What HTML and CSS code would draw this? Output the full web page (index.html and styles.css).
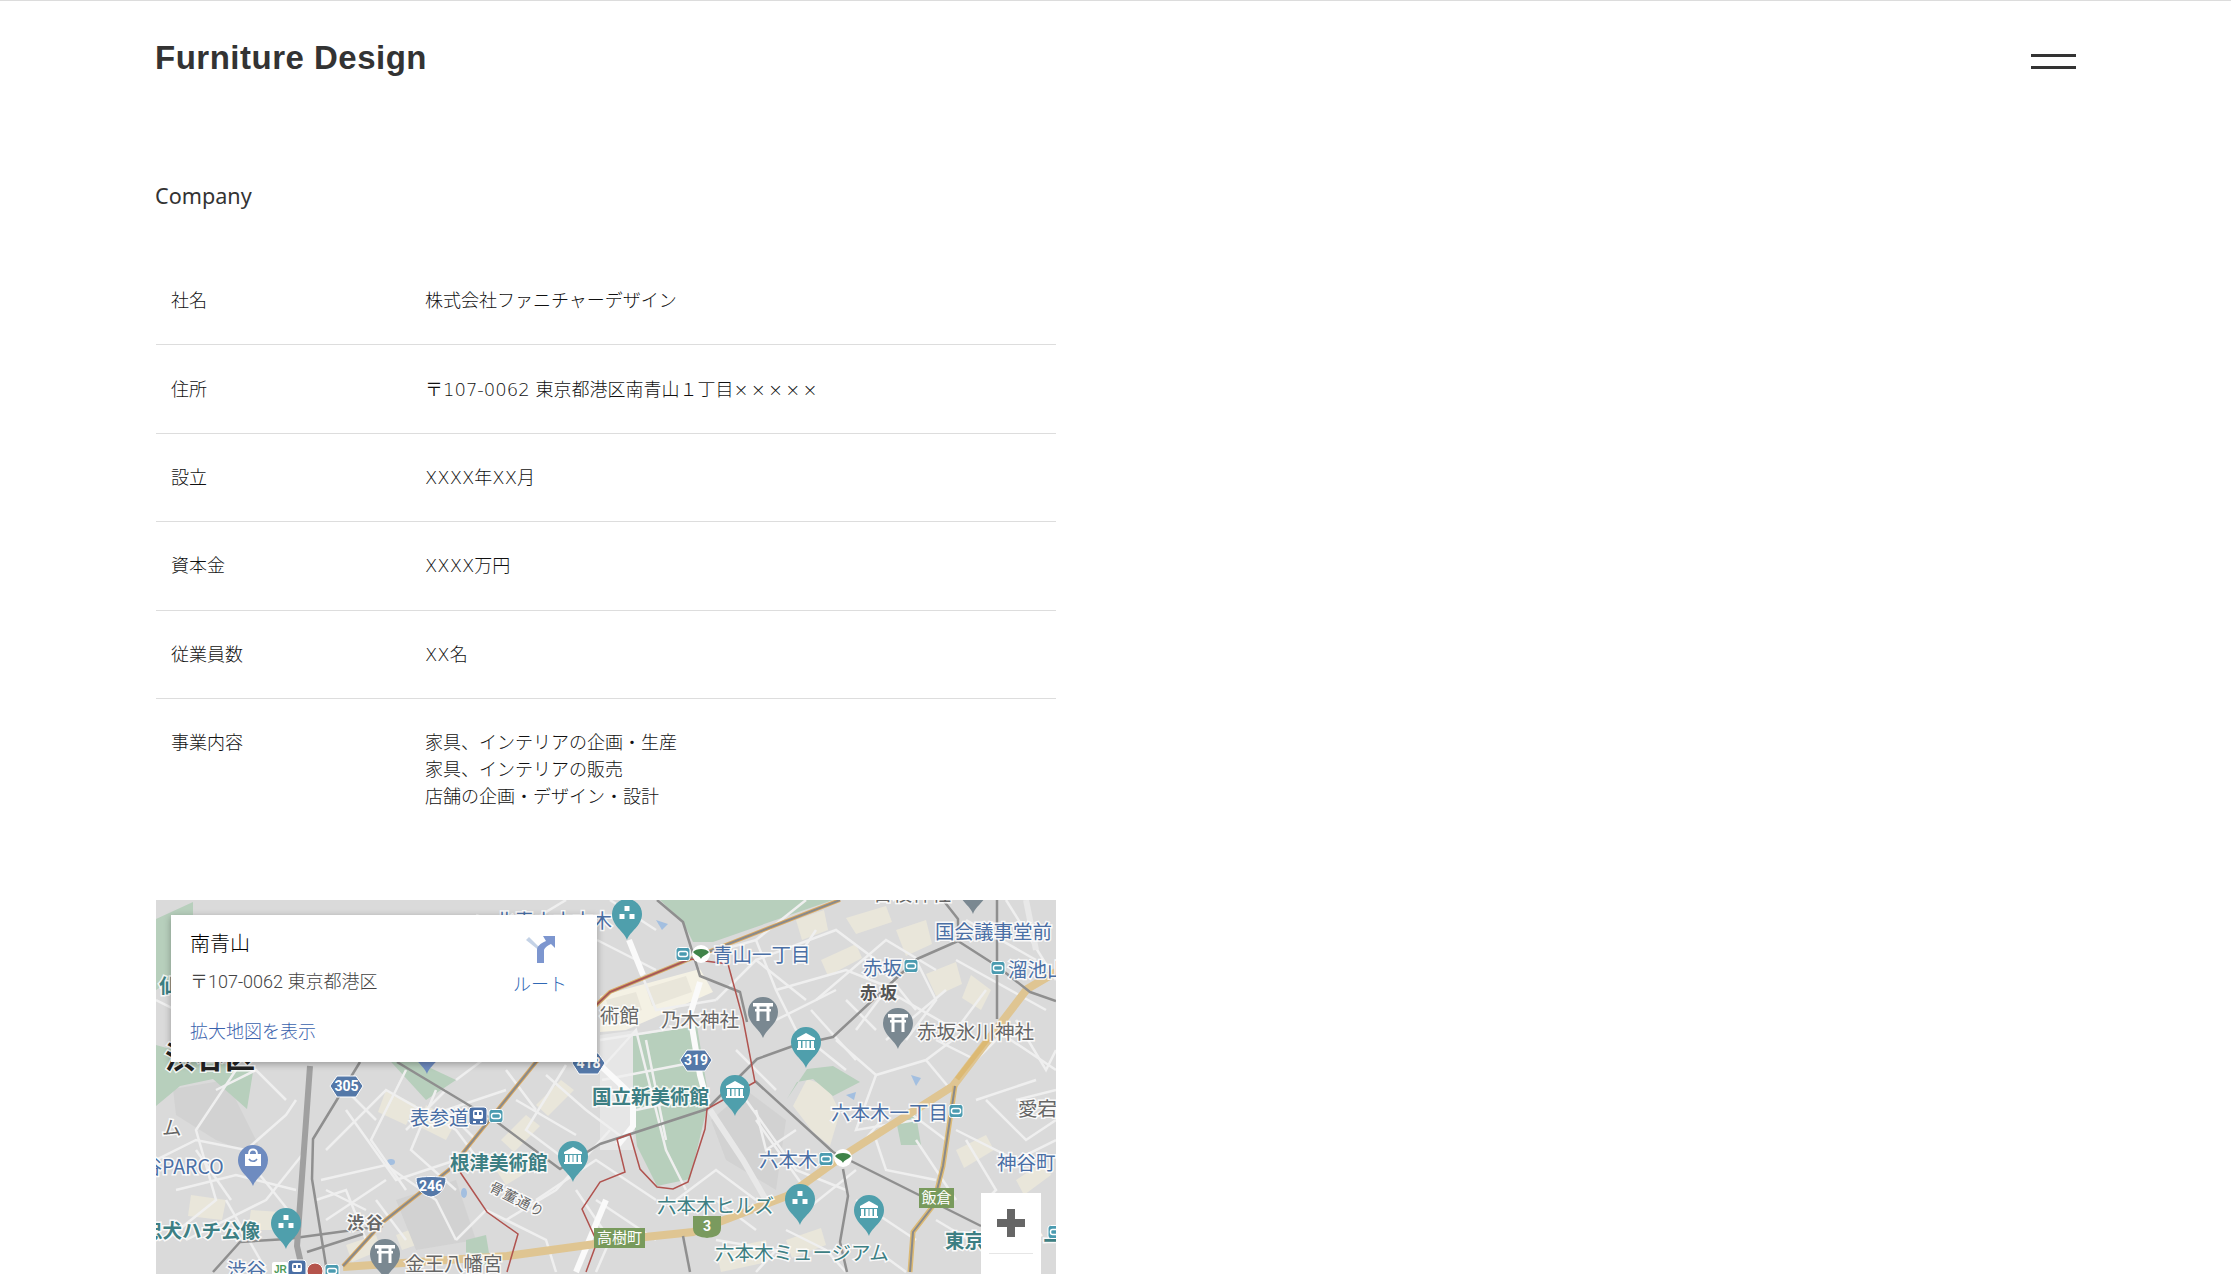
FILE: index.html
```html
<!DOCTYPE html>
<html lang="ja">
<head>
<meta charset="utf-8">
<title>Furniture Design</title>
<link rel="stylesheet" href="styles.css">
</head>
<body>
<header class="site-header">
  <h1 class="logo">Furniture Design</h1>
  <button class="menu" aria-label="menu"><span class="menu-line"></span><span class="menu-line"></span></button>
</header>
<main class="content">
  <h2 class="section-title">Company</h2>
  <table class="info">
    <tr><th>社名</th><td>株式会社ファニチャーデザイン</td></tr>
    <tr><th>住所</th><td>〒107-0062 東京都港区南青山１丁目<span class="marks">×××××</span></td></tr>
    <tr><th>設立</th><td>XXXX年XX月</td></tr>
    <tr><th>資本金</th><td>XXXX万円</td></tr>
    <tr><th>従業員数</th><td>XX名</td></tr>
    <tr class="last"><th>事業内容</th><td>家具、インテリアの企画・生産<br>家具、インテリアの販売<br>店舗の企画・デザイン・設計</td></tr>
  </table>
  <div class="map">
    <svg class="map-art" width="900" height="450" viewBox="0 0 900 450" xmlns="http://www.w3.org/2000/svg">
      <defs>
        <path id="pin" d="M0 26C-3 17-15 12-15 0A15 15 0 1 1 15 0C15 12 3 17 0 26Z"/>
        <g id="museum" fill="#fff"><path d="M0-9L9-4V-2H-9V-4Z"/><rect x="-8" y="-1" width="3" height="7"/><rect x="-3.5" y="-1" width="3" height="7"/><rect x=".5" y="-1" width="3" height="7"/><rect x="5" y="-1" width="3" height="7"/><rect x="-9" y="6" width="18" height="2"/></g>
        <g id="torii" fill="#fff"><rect x="-10" y="-9" width="20" height="3.5"/><rect x="-8" y="-3" width="16" height="2.5"/><rect x="-6.5" y="-6" width="3" height="15"/><rect x="3.5" y="-6" width="3" height="15"/></g>
        <g id="dots" fill="#fff"><rect x="-2.5" y="-8" width="5" height="5"/><rect x="-7.5" y="0" width="5" height="5"/><rect x="2.5" y="0" width="5" height="5"/></g>
        <g id="sub"><rect x="-7" y="-6.5" width="14" height="13" rx="2.5" fill="#4b9bb0" stroke="#fff"/><rect x="-4.5" y="-2.5" width="9" height="5" rx="2" fill="none" stroke="#fff" stroke-width="1.5"/></g>
        <g id="metro"><rect x="-9" y="-9" width="18" height="18" rx="3" fill="#4a6fa5" stroke="#fff"/><rect x="-5" y="-6" width="10" height="9" rx="2" fill="#fff"/><rect x="-3.5" y="-4" width="2.5" height="3" fill="#4a6fa5"/><rect x="1" y="-4" width="2.5" height="3" fill="#4a6fa5"/><path d="M-5 6H-2M2 6H5" stroke="#fff" stroke-width="2"/></g>
        <g id="ginkgo"><circle r="9" fill="#fff"/><path d="M0 5C-1 2-6 1-8-2C-5-6 5-6 8-2C6 1 1 2 0 5Z" fill="#3f8349"/></g>
      </defs>
      <rect class="land" width="900" height="450"/>

      <polygon class="pale" points="444,96 544,69 557,92 470,130 444,132"/>
      <g class="cream">
        <polygon points="450,100 480,92 486,110 456,120"/>
        <polygon points="490,88 530,76 536,92 496,106"/>
        <polygon points="640,20 668,10 672,30 646,40"/>
        <polygon points="690,18 730,6 736,22 700,34"/>
        <polygon points="740,30 770,20 776,44 750,56"/>
        <polygon points="665,60 700,44 706,58 672,76"/>
        <polygon points="770,74 800,62 806,84 780,96"/>
        <polygon points="815,75 835,90 825,110 806,98"/>
        <polygon points="637,206 651,179 671,186 684,212 674,246 657,232"/>
        <polygon points="230,190 260,205 250,225 222,212"/>
        <polygon points="270,205 300,222 290,240 262,226"/>
        <polygon points="345,240 370,215 384,226 358,252"/>
        <polygon points="380,205 405,180 418,190 392,216"/>
        <polygon points="35,295 70,300 66,320 32,316"/>
        <polygon points="95,310 125,312 122,330 92,330"/>
        <polygon points="190,345 220,335 225,350 196,362"/>
        <polygon points="240,335 280,320 286,336 246,350"/>
        <polygon points="630,340 665,328 670,345 636,358"/>
        <polygon points="800,250 830,235 838,250 808,268"/>
        <polygon points="860,280 890,260 895,275 868,295"/>
        <polygon points="560,350 610,340 612,362 565,372"/>
        <polygon points="340,270 370,255 378,268 350,285"/>
      </g>
      <polygon class="darker" points="17,189 70,180 110,260 60,240 20,215"/>
      <polygon class="darker" points="240,300 300,280 320,340 260,350"/>
      <polygon class="darker" points="590,190 630,220 620,290 570,260 555,220"/>
      <polygon class="white-area" points="444,135 480,130 477,250 444,250"/>

      <polygon class="green" points="504,0 677,0 557,42 537,42 527,22"/>
      <polygon class="green" points="477,136 541,126 554,206 550,212 534,279 501,286 481,246 477,212"/>
      <polygon class="green" points="631,199 651,169 677,166 704,182 677,196 657,179 641,182"/>
      <polygon class="green" points="0,19 37,2 37,15 15,22 15,80 0,90"/>
      <polygon class="green" points="0,145 97,172 91,209 57,179 24,186 0,206"/>
      <polygon class="green" points="215,140 300,180 270,200"/>
      <polygon class="green" points="740,220 760,215 765,245 745,245"/>
      <polygon class="green" points="310,340 330,335 335,365 310,365"/>
      <polygon class="water" points="500,20 512,24 506,30"/>
      <polygon class="water" points="690,195 700,192 698,200"/>
      <polygon class="water" points="755,175 765,178 760,186"/>
      <ellipse class="water" cx="235" cy="262" rx="4" ry="3"/>
      <ellipse class="water" cx="308" cy="293" rx="3" ry="5"/>

      <g class="streets">
        <polyline points="0,100 60,130 80,170 40,230 60,300 10,340"/>
        <polyline points="0,260 40,240 90,250 130,215 140,200"/>
        <polyline points="20,290 80,275 140,290"/>
        <polyline points="70,300 110,370"/>
        <polyline points="30,340 110,300 150,250"/>
        <polyline points="170,250 230,190 300,230 330,270"/>
        <polyline points="190,210 240,280 300,260"/>
        <polyline points="165,280 230,265 280,300 300,340"/>
        <polyline points="170,320 230,280"/>
        <polyline points="210,340 190,290 160,300"/>
        <polyline points="250,170 215,240 250,290"/>
        <polyline points="280,190 255,250 300,290"/>
        <polyline points="320,240 290,210 350,190"/>
        <polyline points="350,320 400,290 454,230"/>
        <polyline points="390,175 430,210 470,240"/>
        <polyline points="410,165 370,230 410,260"/>
        <polyline points="360,200 420,235"/>
        <polyline points="300,340 330,310 390,340 400,372"/>
        <polyline points="420,290 454,340 440,372"/>
        <polyline points="380,300 440,260 500,300"/>
        <polyline points="444,170 480,130 510,250 530,290"/>
        <polyline points="444,140 540,125"/>
        <polyline points="446,180 550,160"/>
        <polyline points="490,140 510,240"/>
        <polyline points="480,210 550,195"/>
        <polyline points="480,60 500,110 560,100"/>
        <polyline points="530,60 600,40 620,90 640,130 690,170"/>
        <polyline points="600,40 650,0"/>
        <polyline points="600,60 680,30 720,60 760,110"/>
        <polyline points="660,100 730,40 780,70"/>
        <polyline points="620,90 690,70 740,90"/>
        <polyline points="700,130 730,90 800,130 830,90"/>
        <polyline points="680,140 720,175 770,160 810,130"/>
        <polyline points="720,175 700,230 760,220"/>
        <polyline points="770,160 795,190"/>
        <polyline points="760,60 780,100 750,140"/>
        <polyline points="800,60 890,110"/>
        <polyline points="850,0 900,80"/>
        <polyline points="860,120 890,170 900,150"/>
        <polyline points="830,200 870,240 900,220"/>
        <polyline points="810,240 840,290 830,300"/>
        <polyline points="820,200 880,180"/>
        <polyline points="800,230 860,260 900,240"/>
        <polyline points="780,280 730,270 720,240"/>
        <polyline points="640,230 610,250 600,210"/>
        <polyline points="590,200 640,270 690,290"/>
        <polyline points="600,300 560,270 520,300"/>
        <polyline points="630,330 670,350 690,372"/>
        <polyline points="560,340 620,350 600,372"/>
        <polyline points="700,300 760,340"/>
        <polyline points="720,350 750,372"/>
        <polyline points="780,320 830,350 850,372"/>
        <polyline points="600,220 650,290"/>
        <polyline points="320,15 360,30 410,0"/>
        <polyline points="441,40 500,70"/>
        <polyline points="454,0 500,30"/>
        <polyline points="560,100 600,60 650,100"/>
        <polyline points="620,120 680,90"/>
        <polyline points="720,130 690,100"/>
        <polyline points="780,140 820,160 850,130"/>
        <polyline points="750,210 790,240"/>
        <polyline points="700,250 730,215"/>
        <polyline points="860,200 900,190"/>
        <polyline points="840,130 900,170"/>
        <polyline points="220,300 250,340"/>
        <polyline points="60,190 100,170 130,200"/>
        <polyline points="40,250 75,300"/>
        <polyline points="100,270 140,320"/>
        <polyline points="440,300 500,340"/>
        <polyline points="560,300 600,330"/>
        <polyline points="300,180 340,150"/>
        <polyline points="350,170 380,210"/>
        <polyline points="180,180 220,220"/>
        <polyline points="170,290 210,310"/>
        <polyline points="250,230 290,190"/>
        <polyline points="580,150 620,190"/>
        <polyline points="655,110 700,160"/>
        <polyline points="730,140 790,90"/>
        <polyline points="810,20 880,60"/>
        <polyline points="640,60 660,30"/>
        <polyline points="760,240 800,300"/>
        <polyline points="650,310 700,270"/>
      </g>
      <g class="streets-wide">
        <polyline points="473,40 487,75"/>
        <polyline points="544,82 534,115 544,175 552,205"/>
        <polyline points="444,165 477,196 477,226 462,245"/>
        <polyline points="420,372 450,300"/>
      </g>
      <polyline class="light-road" points="554,210 587,260 610,300"/>
      <polyline class="light-road" points="870,0 880,50"/>

      <polyline class="tan" points="187,367 351,356 454,342 489,337 537,332 631,296 687,256 797,186 871,89 900,72"/>
      <polyline class="gray-road" points="241,162 341,222 404,269 444,244 551,209 601,159 637,146 677,137 761,59 802,41 841,66 874,92 900,101"/>
      <polyline class="gray-road" points="599,181 677,252 761,294 825,326"/>
      <polyline class="gray-road" points="687,269 692,296 684,342 691,372"/>
      <polyline class="gray-road" points="501,0 527,22 544,76 584,92 591,122"/>
      <polyline class="gray-road" points="841,0 841,119"/>
      <polyline class="gray-road" points="787,0 802,19 802,41"/>
      <polyline class="gray-road" points="527,336 534,372"/>
      <polyline class="gray-road" points="204,162 157,239 156,279 171,372"/>
      <polyline class="gray-road" points="57,372 84,342 131,339 227,326"/>
      <polyline class="gray-road" points="151,352 207,334"/>
      <polyline class="rail" points="154,166 141,346 147,372"/>
      <polyline class="tan-thin" points="799,186 787,266 777,306 757,332 754,372"/>
      <polyline class="gray-thin" points="799,186 787,266 777,306 757,332 754,372"/>
      <polyline class="tan-thin" points="832,139 801,179"/>
      <polyline class="tan-road" points="187,366 227,322 294,269 380,162 454,92 534,59 684,0"/>
      <polyline class="gray-thin" points="187,366 227,322 294,269 380,162 454,92 534,59 684,0"/>
      <polyline class="boundary" points="304,272 331,312 362,334 351,372"/>
      <polyline class="boundary" points="380,162 454,92 534,59 572,64 587,119 599,182 551,209 549,229 532,282 517,289 501,287 484,269 474,234 461,239 469,272 444,282 426,309 441,342 430,372"/>

      <text class="t gray" x="717" y="-8">日枝神社</text>
      <text class="t blue" x="339" y="19">北青山六本木</text>
      <text class="t blue" x="557" y="53">青山一丁目</text>
      <text class="t blue" x="779" y="30">国会議事堂前</text>
      <text class="t blue" x="707" y="66">赤坂</text>
      <text class="t blue" x="852" y="68">溜池山王</text>
      <text class="t dark sp" x="704" y="91">赤坂</text>
      <text class="t gray" x="505" y="118">乃木神社</text>
      <text class="t gray" x="761" y="130">赤坂氷川神社</text>
      <text class="t gray" x="444" y="114">術館</text>
      <text class="t teal bold" x="436" y="195">国立新美術館</text>
      <text class="t blue" x="675" y="211">六本木一丁目</text>
      <text class="t gray" x="862" y="207">愛宕</text>
      <text class="t blue" x="603" y="258">六本木</text>
      <text class="t blue" x="841" y="261">神谷町</text>
      <text class="t teal" x="501" y="304">六本木ヒルズ</text>
      <text class="t teal" x="559" y="351">六本木ミュージアム</text>
      <text class="t teal bold" x="789" y="339">東京ミッドー</text>
      <text class="t xdark bold big" x="9" y="155">渋谷区</text>
      <text class="t blue" x="254" y="216">表参道</text>
      <text class="t gray" x="6" y="226">ム</text>
      <text class="t blue" x="-33" y="265">渋谷PARCO</text>
      <text class="t teal bold" x="294" y="261">根津美術館</text>
      <text class="t gray small" transform="translate(335 285) rotate(27)">骨董通り</text>
      <text class="t teal bold" x="-13" y="329">忠犬ハチ公像</text>
      <text class="t gray bold sm" x="191" y="321">渋谷</text>
      <text class="t gray" x="249" y="362">金王八幡宮</text>
      <text class="t blue" x="71" y="368">渋谷</text>
      <text class="t teal bold" x="3" y="84">仙</text>

      <use href="#pin" x="471" y="14" fill="#4f9fac"/><use href="#dots" x="471" y="14"/>
      <use href="#pin" x="607" y="112" fill="#7a8891"/><use href="#torii" x="607" y="112"/>
      <use href="#pin" x="650" y="142" fill="#4f9fac"/><use href="#museum" x="650" y="142"/>
      <use href="#pin" x="742" y="123" fill="#7a8891"/><use href="#torii" x="742" y="123"/>
      <use href="#pin" x="579" y="190" fill="#4f9fac"/><use href="#museum" x="579" y="190"/>
      <use href="#pin" x="644" y="299" fill="#4f9fac"/><use href="#dots" x="644" y="299"/>
      <use href="#pin" x="713" y="310" fill="#4f9fac"/><use href="#museum" x="713" y="310"/>
      <use href="#pin" x="817" y="-12" fill="#7a8891"/>
      <use href="#pin" x="271" y="148" fill="#6e8bc0"/>
      <use href="#pin" x="97" y="260" fill="#6e8bc0"/>
      <rect x="89" y="254" width="16" height="12" fill="#fff"/>
      <path d="M93 254C93 248 101 248 101 254" fill="none" stroke="#fff" stroke-width="1.800"/>
      <path d="M93 259C95 262 99 262 101 259" fill="none" stroke="#6e8bc0" stroke-width="1.600"/>
      <use href="#pin" x="417" y="256" fill="#4f9fac"/><use href="#museum" x="417" y="256"/>
      <use href="#pin" x="130" y="323" fill="#4f9fac"/><use href="#dots" x="130" y="323"/>
      <use href="#pin" x="229" y="354" fill="#7a8891"/><use href="#torii" x="229" y="354"/>

      <use href="#sub" x="527" y="54"/><use href="#ginkgo" x="545" y="54"/>
      <use href="#sub" x="755" y="66"/><use href="#sub" x="842" y="68"/>
      <use href="#sub" x="800" y="211"/><use href="#sub" x="670" y="259"/><use href="#ginkgo" x="687" y="258"/>
      <use href="#metro" x="322" y="216"/><use href="#sub" x="340" y="216"/>
      <use href="#metro" x="141" y="369"/><circle cx="159" cy="371" r="8" fill="#b5544c" stroke="#fff"/><use href="#sub" x="176" y="371"/>
      <use href="#sub" x="899" y="332"/>
      <rect x="116" y="362" width="16" height="14" rx="2" fill="#fff"/>
      <text class="jr" x="118" y="373">JR</text>

      <path class="shield-blue" d="M174 186L181 176H200L207 186L200 197H181Z"/><text class="num" x="190.500" y="191">305</text>
      <path class="shield-blue" d="M416 163L423 153H442L449 163L442 174H423Z"/><text class="num" x="432.500" y="168">418</text>
      <path class="shield-blue" d="M524 160L531 150H549L556 160L549 171H531Z"/><text class="num" x="540" y="165">319</text>
      <path class="shield-blue" d="M260 278C266 276 284 276 290 278C290 288 284 296 275 297C266 296 260 288 260 278Z"/><text class="num" x="275" y="291">246</text>
      <path class="shield-green" d="M537 316H565V328C565 336 558 337 551 338C544 337 537 336 537 328Z"/><text class="num" x="551" y="331">3</text>
      <rect class="station" x="763" y="288" width="35" height="20"/><text class="stn" x="780.500" y="303">飯倉</text>
      <rect class="station" x="438" y="328" width="51" height="20"/><text class="stn" x="463.500" y="343">高樹町</text>
    </svg>

    <section class="card">
      <div class="card-main">
        <div class="place">南青山</div>
        <div class="address">〒107-0062 東京都港区</div>
        <a class="larger" href="#">拡大地図を表示</a>
      </div>
      <a class="route" href="#">
        <svg class="route-icon" width="30" height="28" viewBox="0 0 30 28" xmlns="http://www.w3.org/2000/svg">
          <path d="M1 5L4 2L16 14V17Z" fill="#c4d2e6"/>
          <path d="M12 28V15C12 11 15 9 21 6L18 1H30V13L26 9C20 12 19 14 19 16V28Z" fill="#7d96cf"/>
        </svg>
        <span class="route-label">ルート</span>
      </a>
    </section>

    <div class="zoom">
      <button class="zoom-btn" aria-label="zoom in"><svg width="28" height="28" viewBox="0 0 28 28" xmlns="http://www.w3.org/2000/svg"><path d="M10 0H18V10H28V18H18V28H10V18H0V10H10Z" fill="#666"/></svg></button>
      <div class="zoom-sep"></div>
      <button class="zoom-btn" aria-label="zoom out"><svg width="28" height="28" viewBox="0 0 28 28" xmlns="http://www.w3.org/2000/svg"><path d="M0 10H28V18H0Z" fill="#666"/></svg></button>
    </div>
  </div>
</main>
</body>
</html>
```
FILE: styles.css
```css
html, body { margin: 0; padding: 0; height: 1274px; overflow: hidden; background: #fff; }
body {
  border-top: 1px solid #dcdcdc;
  box-sizing: border-box;
  color: #111;
  font-family: "DejaVu Sans", "Noto Sans CJK JP", sans-serif;
  font-weight: 300;
}
.site-header {
  display: flex;
  justify-content: space-between;
  align-items: flex-start;
  padding: 0 155px 0 155px;
  height: 150px;
}
.logo {
  margin: 35px 0 0;
  font-family: "Liberation Sans", Arial, sans-serif;
  font-size: 33px;
  line-height: 44px;
  font-weight: 700;
  letter-spacing: .5px;
  color: #333;
}
.menu {
  margin: 53px 0 0;
  padding: 0;
  width: 45px;
  border: 0;
  background: none;
  display: flex;
  flex-direction: column;
  gap: 9px;
}
.menu-line { display: block; height: 3px; background: #333; }
.content { width: 900px; margin-left: 156px; }
.section-title {
  margin: 28px 0 45px -1px;
  font-family: "Noto Sans", sans-serif;
  font-size: 21.600px;
  line-height: 33px;
  font-weight: 400;
  color: #333;
}
.info { width: 900px; border-collapse: collapse; table-layout: fixed; font-size: 18px; line-height: 27px; }
.info th, .info td { padding: 30.200px 0; border-bottom: 1px solid #ddd; text-align: left; vertical-align: top; font-weight: 300; }
.info th { width: 254px; padding-left: 15px; }
.info .last th, .info .last td { border-bottom: 0; }
.marks { letter-spacing: 2.200px; }
.map { position: relative; margin-top: 60px; width: 900px; height: 450px; overflow: hidden; }
.map-art { display: block; }
.land { fill: #dadada; }
.pale { fill: #f4f1e4; }
.cream { fill: #e9e6da; }
.darker { fill: #d2d2d2; }
.white-area { fill: #e6e6e6; }
.green { fill: #b7cfbc; }
.water { fill: #a3bfe0; }
.streets polyline { fill: none; stroke: #efefef; stroke-width: 2.500; }
.streets-wide polyline { fill: none; stroke: #fafafa; stroke-width: 6; }
.light-road { fill: none; stroke: #e8e8e8; stroke-width: 6; }
.tan { fill: none; stroke: #dfc592; stroke-width: 8; }
.tan-road { fill: none; stroke: #dca95f; stroke-width: 4; }
.tan-thin { fill: none; stroke: #dcb973; stroke-width: 5; }
.gray-road { fill: none; stroke: #8f8f8f; stroke-width: 2.500; stroke-linejoin: round; }
.gray-thin { fill: none; stroke: #8a8a8a; stroke-width: 2; }
.rail { fill: none; stroke: #a0a0a0; stroke-width: 6; }
.boundary { fill: none; stroke: #b0534f; stroke-width: 1.500; }
.t {
  font-family: "Noto Sans CJK JP", sans-serif;
  font-size: 19.500px;
  font-weight: 400;
  dominant-baseline: central;
  paint-order: stroke;
  stroke: #fff;
  stroke-width: 3px;
  stroke-opacity: .85;
}
.blue { fill: #4a6fa5; }
.teal { fill: #3d7f83; }
.gray { fill: #666; }
.dark { fill: #555; font-weight: 700; }
.xdark { fill: #222; }
.bold { font-weight: 700; }
.sp { font-size: 17px; letter-spacing: 3px; }
.sm { font-size: 17px; letter-spacing: 2px; }
.small { font-size: 14px; letter-spacing: 1px; }
.big { font-size: 30px; }
.num { fill: #fff; font: 700 14px "Roboto", sans-serif; text-anchor: middle; }
.jr { fill: #4e9b58; font: 700 10px "Liberation Sans", sans-serif; }
.stn { fill: #fff; font: 400 15px "Noto Sans CJK JP", sans-serif; text-anchor: middle; }
.station { fill: #789a5c; }
.shield-blue { fill: #5478a8; stroke: #fff; }
.shield-green { fill: #7a9a5e; }
.card {
  position: absolute;
  left: 15px;
  top: 15px;
  width: 426px;
  height: 147px;
  box-sizing: border-box;
  padding: 15px 30px 0 19px;
  background: #fff;
  box-shadow: 0 2px 7px rgba(0, 0, 0, .3);
  display: flex;
  justify-content: space-between;
  font-family: "Roboto", "Noto Sans CJK JP", sans-serif;
  font-weight: 400;
}
.card-main { display: flex; flex-direction: column; align-items: flex-start; }
.place { font-size: 20px; line-height: 28px; color: #000; font-weight: 300; }
.address { margin-top: 10px; font-size: 18px; line-height: 27px; color: #444; font-weight: 300; }
.larger { margin-top: 23px; font-size: 18px; line-height: 27px; color: #3a62ad; text-decoration: none; font-weight: 300; }
.route { display: flex; flex-direction: column; align-items: center; text-decoration: none; padding-top: 5px; }
.route-icon { display: block; }
.route-label { margin-top: 8px; font-size: 18px; line-height: 27px; color: #3068b5; font-weight: 300; }
.zoom {
  position: absolute;
  left: 825px;
  top: 293px;
  width: 60px;
  background: #fff;
  display: flex;
  flex-direction: column;
  align-items: center;
}
.zoom-btn { width: 60px; height: 60px; padding: 0; border: 0; background: none; display: flex; align-items: center; justify-content: center; }
.zoom-sep { width: 44px; height: 1px; background: #e6e6e6; }
```
